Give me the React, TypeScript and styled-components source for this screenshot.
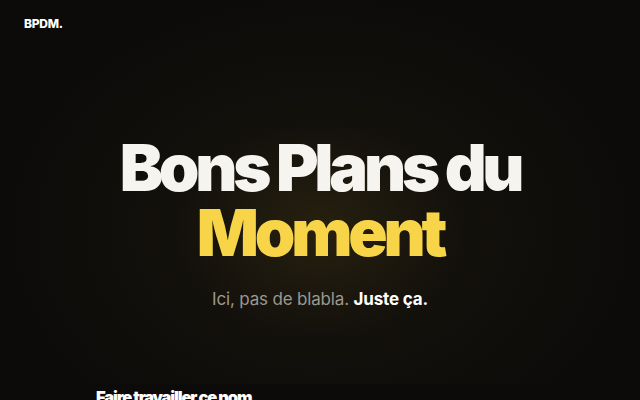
import React from "react";
import styled, { createGlobalStyle } from "styled-components";

const Global = createGlobalStyle`
  html, body { margin: 0; padding: 0; background: #0c0b0a; }
  body { font-family: Inter, "Noto Sans", sans-serif; color: #f5f4ef; }
  * { box-sizing: border-box; }
`;

const Page = styled.div`
  width: 100%;
  min-height: 400px;
  background: #0c0b0a;
  overflow: hidden;
`;

const Hero = styled.section`
  height: 384px;
  display: flex;
  flex-direction: column;
  background: radial-gradient(ellipse 320px 240px at 50% 60%, rgba(62, 50, 20, 0.55) 0%, rgba(32, 27, 15, 0.35) 45%, rgba(12, 11, 10, 0) 100%), #0c0b0a;
`;

const Header = styled.header`
  padding: 16px 24px;
`;

const Logo = styled.div`
  font-weight: 800;
  font-size: 12px;
  letter-spacing: -0.02em;
  color: #ffffff;
`;

const Center = styled.div`
  flex: 1;
  display: flex;
  flex-direction: column;
  align-items: center;
  padding-top: 88px;
`;

const Title = styled.h1`
  margin: 0;
  font-size: 65px;
  line-height: 1;
  font-weight: 900;
  letter-spacing: -0.065em;
  text-align: center;
  color: #f5f4ef;
`;

const Accent = styled.span`
  display: block;
  color: #f8d548;
`;

const Sub = styled.p`
  margin: 24px 0 0;
  font-size: 17px;
  color: #9b9890;
  letter-spacing: -0.01em;
`;

const Strong = styled.strong`
  color: #ffffff;
  font-weight: 700;
`;

const Section = styled.section`
  padding: 3px 96px 0;
`;

const SectionTitle = styled.h2`
  margin: 0;
  font-size: 16.5px;
  font-weight: 900;
  letter-spacing: -0.07em;
  color: #ffffff;
`;

export default function App() {
  return (
    <Page>
      <Global />
      <Hero>
        <Header>
          <Logo>BPDM.</Logo>
        </Header>
        <Center>
          <Title>
            Bons Plans du
            <Accent>Moment</Accent>
          </Title>
          <Sub>
            Ici, pas de blabla. <Strong>Juste ça.</Strong>
          </Sub>
        </Center>
      </Hero>
      <Section>
        <SectionTitle>Faire travailler ce nom</SectionTitle>
      </Section>
    </Page>
  );
}
